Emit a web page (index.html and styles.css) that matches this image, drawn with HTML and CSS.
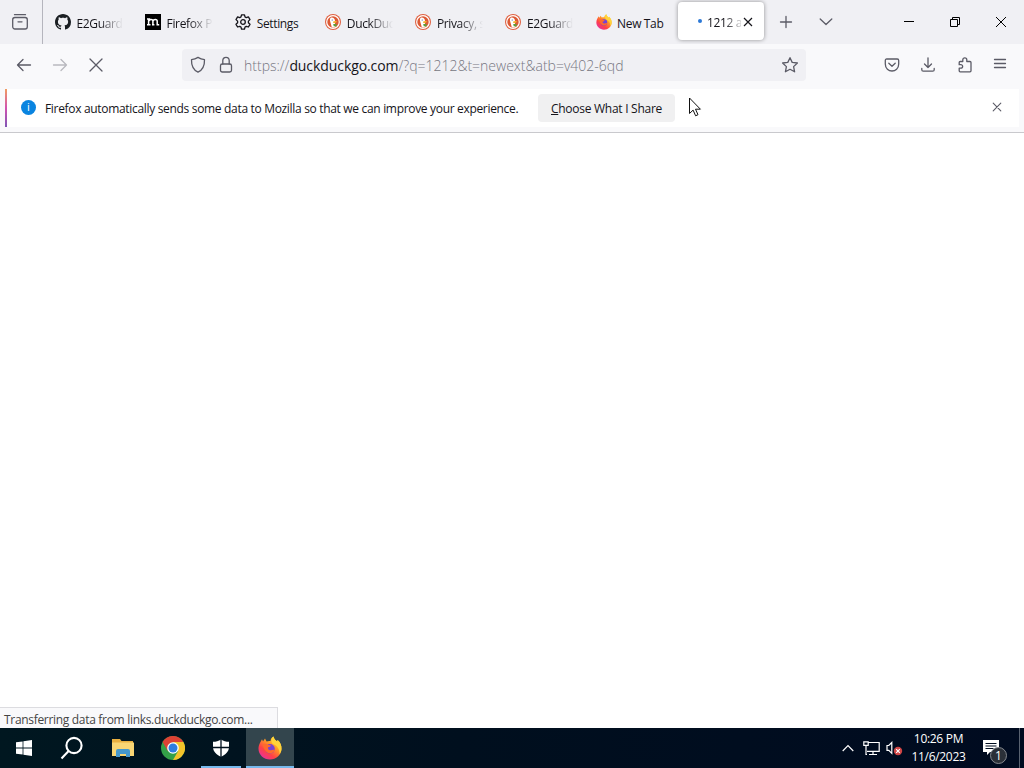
FILE: index.html
```html
<!DOCTYPE html>
<html lang="en">

<head>
    <meta charset="UTF-8">
    <meta name="viewport" content="width=device-width, initial-scale=1.0">
    <title>Firefox</title>
    <link rel="stylesheet" href="styles.css">
</head>

<body>
    <!-- shared icons -->
    <svg class="defs" width="0" height="0">
        <defs>
            <linearGradient id="fox-body" x1="0.85" y1="0.1" x2="0.2" y2="0.95">
                <stop offset="0" stop-color="#ffe23e" />
                <stop offset="0.35" stop-color="#ff9a25" />
                <stop offset="0.7" stop-color="#ff4146" />
                <stop offset="1" stop-color="#e8309a" />
            </linearGradient>
            <symbol id="duck" viewBox="0 0 16 16">
                <circle cx="8" cy="8" r="8" fill="#e06040" />
                <circle cx="8" cy="8" r="6.3" fill="#dc5a35" stroke="#fff" stroke-width="1.200" />
                <path d="M6 3.500c2.300-.4 3.900.9 4 3.200l-.2 1.800.6 4.600c-1.200.6-2.400.6-3.600.2L5.200 7.500C4.700 5.500 4.900 4.200 6 3.500z" fill="#fff" />
                <path d="M8.200 7.600c1-.6 2.600-.7 3.800-.2l-1.800 1.500-2 .2z" fill="#f3b42c" />
                <path d="M8.200 10l3.300.1v2.400l-2.800-.3z" fill="#5a9e3c" />
                <circle cx="7.200" cy="6" r="0.600" fill="#2d4f8e" />
            </symbol>
            <symbol id="fox" viewBox="0 0 24 24">
                <path d="M2.200 6.500L4 3.200l1 2.300 2-3 1.600 2.900c1-.4 2.500-.6 3.900-.4C12.500 3 13.800 1.200 15.500.4c.3 2.300 2.100 3.700 3.700 5.200l.4-1.500c2.600 2.300 4.100 5.400 3.900 9C23.100 19.300 18.200 23.500 12 23.500S.5 19 .5 12.800c0-2.300.6-4.400 1.700-6.300z" fill="url(#fox-body)" />
                <path d="M15.500.4c.3 2.300 2.100 3.700 3.700 5.200l.4-1.500c2.600 2.300 4.100 5.400 3.900 9-.1 2-.9 3.700-1.900 5.200.2-5.500-2.600-8.700-6.400-10C12.800 6.500 13 2 15.500.4z" fill="#ffd33a" />
                <circle cx="12" cy="12.800" r="4.800" fill="#7542d5" />
                <path d="M4.500 8.500c2-1 4-.8 5.400.3l3 .4c-.2 1.300-1.500 1.700-2.800 2.100-.5 1.500.5 3.200 2.700 2.900 1.500-.3 2.500-.9 3.900-.2-.8 2.500-3 3.700-5.300 3.300-3.400-.5-5.400-4-6.900-8.800z" fill="#ff6a2c" />
            </symbol>
        </defs>
    </svg>

    <div class="window">
        <div class="tabbar">
            <div class="view-button">
                <svg class="line" width="18" height="18" viewBox="0 0 18 18">
                    <path d="M3.500 1.700h11" />
                    <rect x="1.700" y="4.500" width="14.600" height="11.500" rx="2.200" />
                    <path d="M7 8.800h4" />
                </svg>
            </div>
            <div class="tabs">
                <div class="tab">
                    <svg width="16" height="16" viewBox="0 0 16 16"><path fill="#1b1f23" d="M8 0C3.580 0 0 3.580 0 8c0 3.540 2.290 6.530 5.470 7.590.4.070.55-.17.55-.38 0-.19-.010-.82-.010-1.490-2.010.37-2.530-.49-2.690-.94-.090-.23-.48-.94-.82-1.130-.28-.15-.68-.52-.010-.53.63-.010 1.080.58 1.230.82.72 1.210 1.870.87 2.330.66.070-.52.28-.87.51-1.070-1.780-.2-3.640-.89-3.640-3.950 0-.87.31-1.590.82-2.150-.080-.2-.36-1.020.080-2.120 0 0 .67-.21 2.200.82.64-.18 1.320-.27 2-.27s1.360.090 2 .27c1.530-1.040 2.200-.82 2.200-.82.44 1.100.16 1.920.080 2.120.51.56.82 1.270.82 2.150 0 3.070-1.870 3.750-3.650 3.950.29.25.54.73.54 1.480 0 1.070-.010 1.930-.010 2.200 0 .21.15.46.55.38A8.010 8.010 0 0 0 16 8c0-4.420-3.580-8-8-8z" /></svg>
                    <span class="tab-label fade">E2Guard</span>
                </div>
                <div class="tab">
                    <svg width="16" height="16" viewBox="0 0 16 16">
                        <rect width="16" height="16" fill="#000" />
                        <path d="M2 5h2.500v1M3.600 5v5.700M2 10.700h3.500M4 7c.5-2 3.900-2.200 3.900 0v3.700M7 10.700h2.400M8 7c.5-2 4.200-2.200 4.200 0v3.700h2" fill="none" stroke="#fff" stroke-width="1.500" />
                    </svg>
                    <span class="tab-label fade">Firefox P</span>
                </div>
                <div class="tab">
                    <svg width="16" height="16" viewBox="0 0 16 16" fill="none" stroke="#15141a" stroke-width="1.300" stroke-linejoin="round">
                        <path d="M6.500.8h3l.5 2.100 1.300.8 2.100-.8 1.600 2.700-1.600 1.500v1.700l1.600 1.500-1.600 2.700-2.100-.7-1.300.8-.5 2.100h-3L6 13.100l-1.300-.8-2.100.7L1 10.300l1.600-1.500V7.100L1 5.600l1.600-2.700 2.100.8L6 2.900z" />
                        <circle cx="8" cy="8" r="2.300" />
                    </svg>
                    <span class="tab-label">Settings</span>
                </div>
                <div class="tab">
                    <svg width="16" height="16"><use href="#duck" /></svg>
                    <span class="tab-label fade">DuckDuc</span>
                </div>
                <div class="tab">
                    <svg width="16" height="16"><use href="#duck" /></svg>
                    <span class="tab-label fade">Privacy, s</span>
                </div>
                <div class="tab">
                    <svg width="16" height="16"><use href="#duck" /></svg>
                    <span class="tab-label fade">E2Guardi</span>
                </div>
                <div class="tab">
                    <svg width="16" height="16"><use href="#fox" /></svg>
                    <span class="tab-label">New Tab</span>
                </div>
                <div class="tab active">
                    <span class="loading"></span>
                    <span class="tab-label fade">1212 a</span>
                    <svg class="tab-close" width="10" height="10" viewBox="0 0 10 10"><path d="M1 1l8 8M9 1L1 9" /></svg>
                </div>
            </div>
            <svg class="line new-tab" width="14" height="14" viewBox="0 0 14 14"><path d="M7 1.500v11M1.500 7h11" /></svg>
            <svg class="line all-tabs" width="14" height="14" viewBox="0 0 14 14"><path d="M1.200 4l5.800 5.500L12.800 4" /></svg>
            <div class="window-controls">
                <svg width="10" height="10" viewBox="0 0 10 10"><path d="M0 4.500h10" /></svg>
                <svg width="10" height="10" viewBox="0 0 10 10"><path d="M.5 2.500h7v7h-7zM2.500 2.500v-2h7v7h-2" /></svg>
                <svg width="10" height="10" viewBox="0 0 10 10"><path d="M0 0l10 10M10 0L0 10" /></svg>
            </div>
        </div>

        <div class="navbar">
            <div class="nav-buttons">
                <svg class="line" width="16" height="16" viewBox="0 0 16 16"><path d="M14.500 8H1.500M7 2.500L1.500 8 7 13.500" /></svg>
                <svg class="line disabled" width="16" height="16" viewBox="0 0 16 16"><path d="M1.500 8h13M9 2.500L14.500 8 9 13.500" /></svg>
                <svg class="line" width="16" height="16" viewBox="0 0 16 16"><path d="M2 2l12 12M14 2L2 14" /></svg>
            </div>
            <div class="urlbar">
                <svg class="line" width="16" height="18" viewBox="0 0 16 18"><path d="M8 1.400c2 1.300 4 2 6.500 2.300.2 6-1.500 10-6.500 12.500C3 13.700 1.300 9.700 1.500 3.700 4 3.400 6 2.700 8 1.400z" /></svg>
                <svg class="line" width="14" height="18" viewBox="0 0 14 18"><rect x="1.500" y="8" width="11" height="8" rx="1.800" /><path d="M3.800 8V4.500a3.200 3.200 0 0 1 6.400 0V8" /></svg>
                <span class="url">https://<b>duckduckgo.com</b>/?q=1212&amp;t=newext&amp;atb=v402-6qd</span>
                <svg class="line star" width="18" height="18" viewBox="0 0 18 18"><path d="M9 1.700l2.200 4.700 5.200.6-3.800 3.600 1 5.200L9 13.300l-4.600 2.500 1-5.200L1.600 7l5.200-.6z" /></svg>
            </div>
            <div class="tools">
                <svg class="line" width="16" height="16" viewBox="0 0 16 16"><path d="M2.800 2h10.400q1.500 0 1.500 1.500V7c0 9.300-13.400 9.300-13.400 0V3.500Q1.300 2 2.800 2zM4.800 6.200L8 9.200l3.200-3" /></svg>
                <svg class="line" width="16" height="16" viewBox="0 0 16 16"><path d="M8 .8v9.700M4.500 7L8 10.500 11.500 7M1.800 11.500v1.200q0 1.500 1.500 1.500h9.400q1.500 0 1.500-1.500v-1.200" /></svg>
                <svg class="line" width="16" height="16" viewBox="0 0 16 16"><path d="M3.200 4.500h2.600V2.800a2 2 0 0 1 4 0v1.700H13q1 0 1 1v8.300q0 1-1 1H3.200q-1 0-1-1v-2.600h1.700a1.700 1.700 0 0 0 0-3.500H2.200V5.500q0-1 1-1z" /></svg>
                <svg class="line menu" width="14" height="14" viewBox="0 0 14 14"><path d="M1.500 2.500h11M1.500 6.500h11M1.500 10.500h11" /></svg>
            </div>
        </div>

        <div class="notification-area">
            <div class="notification">
                <span class="info">i</span>
                <span class="message">Firefox automatically sends some data to Mozilla so that we can improve your experience.</span>
                <button class="button"><u>C</u>hoose What I Share</button>
                <svg class="line dismiss" width="10" height="10" viewBox="0 0 10 10"><path d="M1.200 1.200l7.600 7.600M8.800 1.200L1.200 8.800" /></svg>
            </div>
        </div>

        <div class="page">
            <div class="status"><span>Transferring data from links.duckduckgo.com...</span></div>
        </div>
    </div>

    <div class="taskbar">
        <div class="task start">
            <svg width="16" height="16" viewBox="0 0 16 16" fill="#fff"><path d="M0 2.300l6.600-.9v6.200H0zM7.400 1.300L16 0v7.600H7.400zM0 8.400h6.600v6.200L0 13.700zM7.400 8.400H16V16l-8.600-1.200z" /></svg>
        </div>
        <div class="task search">
            <svg width="24" height="24" viewBox="0 0 24 24" fill="none" stroke="#fff" stroke-width="2.100"><circle cx="14" cy="9.500" r="7.600" /><path d="M8.600 15L1.500 22.500" /></svg>
        </div>
        <div class="task explorer">
            <svg width="22" height="20" viewBox="0 0 22 20">
                <path d="M0 1h8l1.500 2H21v4H0z" fill="#e9b040" />
                <path d="M0 4.500h22V18H0z" fill="#f9d674" />
                <path d="M4 19v-6q0-2 2-2h10q2 0 2 2v6h-4v-3H8v3z" fill="#4598cc" />
            </svg>
        </div>
        <div class="task chrome">
            <svg width="24" height="24" viewBox="0 0 24 24">
                <circle cx="12" cy="12" r="12" fill="#34a048" />
                <path d="M1.600 6A12 12 0 0 1 22.400 6H12L6.800 15z" fill="#dd4234" />
                <path d="M22.400 6A12 12 0 0 1 12 24l5.200-9L12 6z" fill="#f4c32a" />
                <circle cx="12" cy="12" r="5.800" fill="#fff" />
                <circle cx="12" cy="12" r="4.500" fill="#2f7de0" />
            </svg>
        </div>
        <div class="task running">
            <svg width="18" height="18" viewBox="0 0 18 18"><path d="M9 .5c2.500 1.700 5 2.200 8 2.300v5c0 5-3.500 8-8 9.900-4.500-1.900-8-4.900-8-9.900v-5c3-.1 5.500-.6 8-2.300z" fill="#fff" /><path d="M9 0v18M0 8.500h18" stroke="#00101d" stroke-width="1.300" /></svg>
        </div>
        <div class="task current">
            <svg width="24" height="24"><use href="#fox" /></svg>
        </div>
        <div class="tray">
            <svg width="12" height="8" viewBox="0 0 12 8"><path d="M.7 7L6 1.500 11.300 7" /></svg>
            <svg class="network" width="17" height="15" viewBox="0 0 17 15"><path d="M5.500 1.500h10.700v8.800H4M.8.800h4.400v3.500H.8zM3 4.300v9.200h1M10 10.300v3M6 13.500h8" /></svg>
            <svg class="volume" width="17" height="15" viewBox="0 0 17 15"><path d="M1 4.500h1.800l3-3v10.800l-3-3H1z" /><circle cx="12" cy="10" r="4.200" fill="#d04545" stroke="none" /><path d="M10.200 8.200l3.600 3.600M13.800 8.200l-3.600 3.600" /></svg>
            <div class="clock"><span class="time">10:26 PM</span><span class="date">11/6/2023</span></div>
            <div class="action-center">
                <svg width="16" height="16" viewBox="0 0 16 16"><path d="M0 0h16v12H7l-3 3v-3H0z" fill="#fff" stroke="none" /><path d="M2.500 3.500h11M2.500 6h11M2.500 8.500h8" stroke="#000d20" /></svg>
                <span class="badge">1</span>
            </div>
            <div class="show-desktop"></div>
        </div>
    </div>

    <svg class="cursor" width="14" height="20" viewBox="0 0 14 20"><path d="M1.500 1v15.500l3.600-3.400 2.500 5.700 2.400-1.100-2.500-5.500h4.900z" fill="#fff" stroke="#111" /></svg>
</body>

</html>
```
FILE: styles.css
```css
* {
    box-sizing: border-box;
}

body {
    margin: 0;
    width: 1024px;
    height: 768px;
    overflow: hidden;
    display: flex;
    flex-direction: column;
    font-family: "Open Sans", "Noto Sans", sans-serif;
    font-size: 12px;
    color: #15141a;
}

svg {
    display: block;
    flex-shrink: 0;
}

.defs {
    position: absolute;
}

.line {
    fill: none;
    stroke: #5b5b66;
    stroke-width: 1.3;
    stroke-linecap: round;
    stroke-linejoin: round;
}

.window {
    flex: 1;
    display: flex;
    flex-direction: column;
}

/* tabs */
.tabbar {
    height: 44px;
    display: flex;
    align-items: center;
    background: #f0f0f4;
}

.view-button {
    width: 43px;
    height: 44px;
    padding: 13px 0 0 11px;
    border-right: 1px solid #b5b5bd;
}

.tabs {
    display: flex;
    width: 725px;
    padding-left: 4px;
}

.tab {
    width: 90.1px;
    height: 38px;
    padding-left: 8px;
    display: flex;
    align-items: center;
    flex-shrink: 0;
}

.tab-label {
    width: 52px;
    margin-left: 5.5px;
    padding-top: 2px;
    white-space: nowrap;
    letter-spacing: -0.35px;
}

.fade {
    -webkit-mask-image: linear-gradient(to right, #000 22px, transparent 46px);
    mask-image: linear-gradient(to right, #000 22px, transparent 46px);
}

.tab.active {
    width: 86px;
    margin: -1px 0 0 0.3px;
    padding-left: 20px;
    border-radius: 4px;
    background: #fff;
    box-shadow: 0 0 4px rgba(0, 0, 0, 0.4);
}

.active .tab-label {
    width: 34px;
    margin-left: 5px;
    -webkit-mask-image: linear-gradient(to right, #000 17px, transparent 38px);
    mask-image: linear-gradient(to right, #000 17px, transparent 38px);
}

.loading {
    width: 4px;
    height: 4px;
    border-radius: 50%;
    background: #2b78d6;
}

.tab-close {
    margin: 2px 0 0 2px;
    stroke: #15141a;
    stroke-width: 1.2;
}

.new-tab {
    margin-left: 10.5px;
}

.all-tabs {
    margin-left: 26.5px;
}

.window-controls {
    display: flex;
    gap: 36px;
    margin-left: auto;
    margin-right: 18px;
}

.window-controls svg {
    fill: none;
    stroke: #000;
    stroke-width: 1;
}

/* toolbar */
.navbar {
    height: 44px;
    display: flex;
    align-items: center;
    background: #f9f9fb;
}

.nav-buttons {
    width: 182px;
    margin-top: -2px;
    padding-left: 16px;
    display: flex;
    gap: 20px;
}

.disabled {
    opacity: 0.4;
}

.urlbar {
    width: 624px;
    height: 32px;
    margin-top: -3px;
    padding: 0 7px 0 8px;
    display: flex;
    align-items: center;
    gap: 13px;
    border-radius: 4px;
    background: #f0f0f4;
}

.url {
    margin-left: -2px;
    padding-top: 2px;
    font-size: 14px;
    font-weight: 300;
    color: #777782;
    white-space: nowrap;
}

.url b {
    font-weight: 400;
    letter-spacing: -0.08px;
    color: #15141a;
}

.star {
    margin-left: auto;
}

.tools {
    display: flex;
    align-items: center;
    gap: 20.5px;
    margin: -3px 17px 0 auto;
}

.menu {
    margin-top: -1px;
}

/* notification bar */
.notification-area {
    height: 45px;
    padding: 1px 5px 5px;
    border-bottom: 1px solid #c9c9cd;
    background: #f9f9fb;
}

.notification {
    height: 38px;
    padding: 0 17px 0 14px;
    display: flex;
    align-items: center;
    border-left: 2px solid;
    border-image: linear-gradient(#f2a05c, #d152b0 50%, #7b55b5) 1;
    background: #fff;
}

.info {
    width: 15px;
    height: 15px;
    margin-top: -2px;
    border-radius: 50%;
    background: #0a84e0;
    color: #fff;
    font-size: 11px;
    line-height: 14px;
    text-align: center;
}

.message {
    width: 493px;
    margin-left: 9px;
    padding-top: 1px;
    letter-spacing: -0.32px;
    white-space: nowrap;
}

.button {
    width: 137px;
    height: 28px;
    padding: 1px 0 0;
    border: none;
    border-radius: 4px;
    background: #f0f0f1;
    color: #15141a;
    font: 12px "Open Sans", "Noto Sans", sans-serif;
    letter-spacing: -0.27px;
}

.dismiss {
    margin: -2px 0 0 auto;
    stroke-width: 1.1;
}

.page {
    flex: 1;
    display: flex;
    align-items: flex-end;
    background: #fff;
}

.status {
    width: 278px;
    height: 21px;
    padding-left: 4px;
    border: 1px solid #dcdce0;
    border-width: 1px 1px 0 0;
    background: #f9f9fb;
    color: #444;
    line-height: 23px;
    letter-spacing: -0.31px;
    white-space: nowrap;
}

/* taskbar */
.taskbar {
    height: 40px;
    display: flex;
    background: linear-gradient(to right, #001720, #000f1e 45%, #000b20);
}

.task {
    width: 48px;
    display: flex;
    align-items: center;
    justify-content: center;
}

.task.explorer {
    width: 53px;
}

.task.chrome {
    width: 47px;
}

.task.running {
    width: 40px;
    margin: 0 5px;
    border-bottom: 2px solid #76b9ed;
    padding-top: 2px;
}

.task.current {
    padding-top: 2px;
    border-bottom: 2px solid #76b9ed;
    background: #33454d;
}

.tray {
    display: flex;
    align-items: center;
    margin-left: auto;
    color: #fff;
}

.tray svg {
    fill: none;
    stroke: #fff;
    stroke-width: 1.2;
}

.network {
    margin-left: 9px;
}

.volume {
    margin-left: 6px;
}

.clock {
    width: 71px;
    display: flex;
    flex-direction: column;
    align-items: center;
    line-height: 18px;
    letter-spacing: -0.3px;
    white-space: nowrap;
}

.action-center {
    position: relative;
    width: 26px;
    margin-left: 9px;
}

.badge {
    position: absolute;
    left: 7px;
    top: 7px;
    width: 17px;
    height: 17px;
    border: 1px solid #85898f;
    border-radius: 50%;
    background: #2b3038;
    font-size: 12px;
    line-height: 15px;
    text-align: center;
}

.show-desktop {
    width: 5px;
    height: 40px;
    margin-left: 10px;
    border-left: 1px solid #596270;
}

.cursor {
    position: absolute;
    left: 688px;
    top: 97px;
}
```
